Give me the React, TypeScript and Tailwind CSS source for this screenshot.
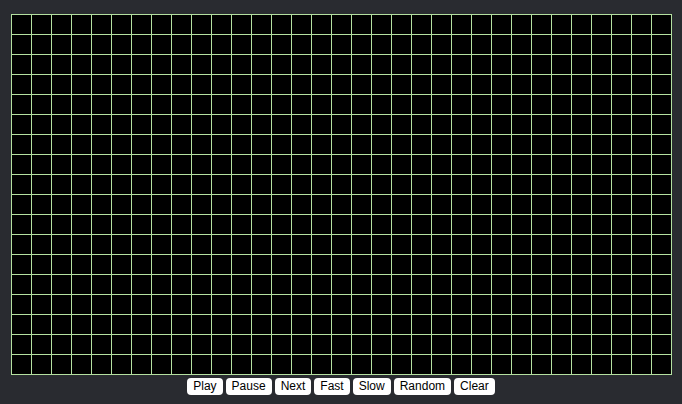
import React from "react";

const COLS = 33;
const ROWS = 18;
const BUTTONS = ["Play", "Pause", "Next", "Fast", "Slow", "Random", "Clear"];

const App = () => {
  const cells = Array.from({ length: COLS * ROWS });
  return (
    <div
      className="w-full h-screen min-h-[404px] bg-[#292b30] flex flex-col items-center pt-[14px]"
      style={{ fontFamily: '"Liberation Sans", Arial, sans-serif' }}
    >
      <div className="grid grid-cols-[repeat(33,20px)] border-l border-t border-[#b4e0a0] bg-black">
        {cells.map((_, i) => (
          <div key={i} className="w-[20px] h-[20px] border-r border-b border-[#b4e0a0]" />
        ))}
      </div>
      <div className="flex gap-[3px] mt-[3px]">
        {BUTTONS.map((b) => (
          <button
            key={b}
            className="h-[17px] px-[6px] bg-white rounded-[4px] text-[12px] leading-[17px] text-black"
          >
            {b}
          </button>
        ))}
      </div>
    </div>
  );
};

export default App;
